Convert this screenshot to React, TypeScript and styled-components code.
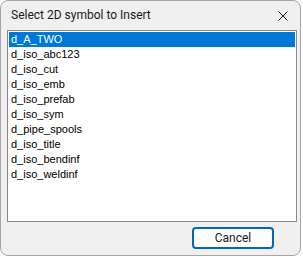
import styled, { createGlobalStyle } from "styled-components";

const GlobalStyle = createGlobalStyle`
  html, body {
    margin: 0;
    padding: 0;
    background: #ffffff;
  }
`;

const Window = styled.div`
  box-sizing: border-box;
  width: 301px;
  height: 256px;
  border: 1px solid #a5a5a5;
  border-radius: 8px;
  background: #f0f0f0;
  display: flex;
  flex-direction: column;
  font-family: Roboto, "Noto Sans", sans-serif;
  overflow: hidden;
`;

const TitleBar = styled.div`
  height: 29px;
  display: flex;
  align-items: center;
  justify-content: space-between;
  padding: 0 9px 0 10px;
  font-size: 12px;
  color: #1a1a1a;
`;

const Title = styled.span`
  padding-bottom: 1px;
`;

const CloseButton = styled.div`
  width: 30px;
  height: 29px;
  display: flex;
  align-items: center;
  justify-content: center;
  margin-right: -7px;
`;

const ListBox = styled.ul`
  box-sizing: border-box;
  list-style: none;
  margin: 0 3px 0 6px;
  padding: 1px;
  height: 192px;
  border: 1px solid #828790;
  background: #ffffff;
  font-family: "Liberation Sans", Arial, sans-serif;
  font-size: 11px;
`;

const Item = styled.li<{ $selected?: boolean }>`
  height: 15px;
  line-height: 15px;
  padding-left: 2px;
  color: ${(p) => (p.$selected ? "#ffffff" : "#000000")};
  background: ${(p) => (p.$selected ? "#0078d7" : "transparent")};
`;

const Footer = styled.div`
  display: flex;
  justify-content: flex-end;
  padding: 5px 26px 0 0;
`;

const Button = styled.button`
  box-sizing: border-box;
  width: 82px;
  height: 22px;
  border: 2px solid #0067c0;
  border-radius: 4px;
  background: #fdfdfd;
  font-family: Roboto, "Noto Sans", sans-serif;
  font-size: 12px;
  color: #1a1a1a;
  padding: 0 0 1px;
`;

const symbols = [
  "d_A_TWO",
  "d_iso_abc123",
  "d_iso_cut",
  "d_iso_emb",
  "d_iso_prefab",
  "d_iso_sym",
  "d_pipe_spools",
  "d_iso_title",
  "d_iso_bendinf",
  "d_iso_weldinf",
];

export default function App() {
  return (
    <>
      <GlobalStyle />
      <Window>
        <TitleBar>
          <Title>Select 2D symbol to Insert</Title>
          <CloseButton>
            <svg width="10" height="10" viewBox="0 0 10 10">
              <path d="M0.5 0.5 L9.5 9.5 M9.5 0.5 L0.5 9.5" stroke="#1a1a1a" strokeWidth="1" />
            </svg>
          </CloseButton>
        </TitleBar>
        <ListBox>
          {symbols.map((s, i) => (
            <Item key={s} $selected={i === 0}>
              {s}
            </Item>
          ))}
        </ListBox>
        <Footer>
          <Button>Cancel</Button>
        </Footer>
      </Window>
    </>
  );
}
